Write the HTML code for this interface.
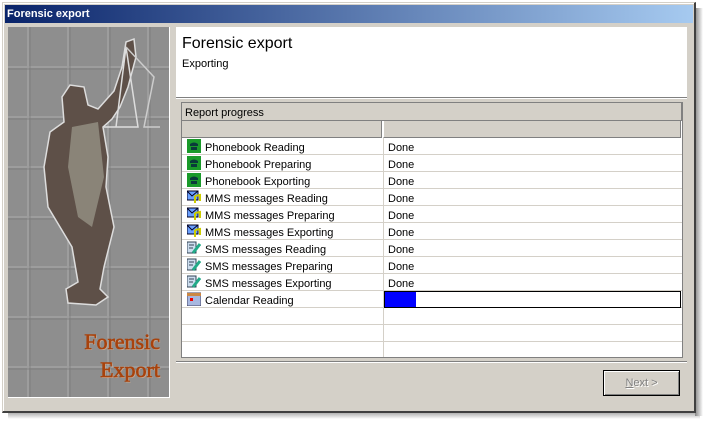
<!DOCTYPE html>
<html><head><style>
*{margin:0;padding:0;box-sizing:border-box}
body{width:709px;height:425px;background:#fff;position:relative;overflow:hidden;font-family:"Liberation Sans",Tahoma,sans-serif;font-size:11px;color:#000}
.a{position:absolute}
.row{position:absolute;left:182px;width:500px;height:17px;border-bottom:1px solid #d4d0c8;background:#fff}
.row .c2{position:absolute;left:206px;top:4px}
.row .ic{position:absolute;left:5px;top:1px;width:14px;height:14px}
.row .t{position:absolute;left:23px;top:4px}
</style></head><body>
<div class="a" style="left:8px;top:411px;width:692px;height:8px;background:linear-gradient(#999,#fff)"></div>
<div class="a" style="left:695px;top:8px;width:8px;height:408px;background:linear-gradient(90deg,#888,#fff)"></div>
<div class="a" style="left:2px;top:2px;width:694px;height:411px;background:#d4d0c8;border:1px solid #d4d0c8;border-right:2px solid #404040;border-bottom:2px solid #404040;box-shadow:inset 1px 1px 0 #fff"></div>
<div class="a" style="left:5px;top:5px;width:688px;height:18px;background:linear-gradient(90deg,#0a246a,#a6caf0)"></div>
<div class="a" style="left:7px;top:8px;color:#fff;font-weight:bold;font-size:11px">Forensic export</div>
<div class="a" style="left:8px;top:27px;width:162px;height:371px;background:#8e8e8e;border-right:1px solid #fff;border-bottom:1px solid #fff;overflow:hidden">
<svg width="162" height="371" viewBox="0 0 162 371">
<g stroke="#a4a4a4" stroke-width="2" fill="none" opacity=".7">
<path d="M0 40H162M0 90H162M0 140H162M0 190H162M0 240H162M0 290H162M0 340H162M20 0V371M60 0V371M100 0V371M140 0V371"/></g>
<g stroke="#777" stroke-width="1" fill="none" opacity=".7">
<path d="M0 42H162M0 92H162M0 142H162M0 192H162M0 242H162M0 292H162M0 342H162M22 0V371M62 0V371M102 0V371M142 0V371"/></g>
<path d="M118 15 L126 12 L128 30 L120 60 L112 80 L104 92 L95 100 L100 130 L98 160 L106 200 L96 240 L92 262 L100 270 L88 278 L60 276 L58 262 L70 255 L64 220 L52 200 L40 180 L36 140 L42 105 L56 95 L54 70 L62 58 L76 60 L80 78 L90 82 L106 64 L114 40Z" fill="#5e5048" stroke="#ddd" stroke-width="1.5"/>
<path d="M64 100 L90 95 L96 150 L84 200 L70 190 L60 140Z" fill="#8a8478"/>
<path d="M118 20 L108 100 L96 100 M118 20 L130 100 L122 100 M98 100 H128" stroke="#ddd" stroke-width="1.5" fill="none"/>
<path d="M118 20 L146 50 L136 100 L152 100" stroke="#ccc" stroke-width="1.5" fill="none"/>
<g font-family="Liberation Serif,serif" font-size="22" text-anchor="end">
<text x="153" y="323" fill="#e0b090" opacity=".7">Forensic</text>
<text x="153" y="351" fill="#e0b090" opacity=".7">Export</text>
<text x="152" y="322" fill="#a8420c" stroke="#a8420c" stroke-width=".6">Forensic</text>
<text x="152" y="350" fill="#a8420c" stroke="#a8420c" stroke-width=".6">Export</text>
</g>
</svg></div>
<div class="a" style="left:176px;top:27px;width:511px;height:70px;background:#fff"></div>
<div class="a" style="left:182px;top:35px;font-size:16px">Forensic export</div>
<div class="a" style="left:182px;top:58px">Exporting</div>
<div class="a" style="left:176px;top:97px;width:511px;height:1px;background:#808080"></div>
<div class="a" style="left:176px;top:98px;width:511px;height:1px;background:#fff"></div>
<div class="a" style="left:181px;top:102px;width:502px;height:256px;background:#fff;border:1px solid #808080"></div>
<div class="a" style="left:182px;top:103px;width:500px;height:18px;background:#d4d0c8;border-bottom:1px solid #808080;border-right:1px solid #808080"></div>
<div class="a" style="left:185px;top:107px">Report progress</div>
<div class="a" style="left:182px;top:121px;width:200px;height:17px;background:#d4d0c8;border-right:1px solid #808080;border-bottom:1px solid #808080"></div>
<div class="a" style="left:383px;top:121px;width:298px;height:17px;background:#d4d0c8;border-bottom:1px solid #808080;border-right:1px solid #808080;border-left:1px solid #fff"></div>
<div class="a" style="left:383px;top:138px;width:1px;height:219px;background:#d4d0c8;z-index:2"></div>

<div class="row" style="top:138px"><svg class="ic"><rect width="14" height="14" fill="#1a9a2a"/><path d="M3 5Q7 2 11 5V7H3Z M4 8H10V11H4Z" fill="#0a3a3a"/></svg><span class="t">Phonebook Reading</span><span class="c2">Done</span></div>
<div class="row" style="top:155px"><svg class="ic"><rect width="14" height="14" fill="#1a9a2a"/><path d="M3 5Q7 2 11 5V7H3Z M4 8H10V11H4Z" fill="#0a3a3a"/></svg><span class="t">Phonebook Preparing</span><span class="c2">Done</span></div>
<div class="row" style="top:172px"><svg class="ic"><rect width="14" height="14" fill="#1a9a2a"/><path d="M3 5Q7 2 11 5V7H3Z M4 8H10V11H4Z" fill="#0a3a3a"/></svg><span class="t">Phonebook Exporting</span><span class="c2">Done</span></div>
<div class="row" style="top:189px"><svg class="ic"><rect x="0" y="1" width="11" height="9" fill="#6aa0ff" stroke="#002" /><path d="M0 1L5 6L11 1" stroke="#002" fill="none"/><path d="M8 6V13M8 6L13 5V11" stroke="#cc0" stroke-width="2" fill="none"/></svg><span class="t">MMS messages Reading</span><span class="c2">Done</span></div>
<div class="row" style="top:206px"><svg class="ic"><rect x="0" y="1" width="11" height="9" fill="#6aa0ff" stroke="#002" /><path d="M0 1L5 6L11 1" stroke="#002" fill="none"/><path d="M8 6V13M8 6L13 5V11" stroke="#cc0" stroke-width="2" fill="none"/></svg><span class="t">MMS messages Preparing</span><span class="c2">Done</span></div>
<div class="row" style="top:223px"><svg class="ic"><rect x="0" y="1" width="11" height="9" fill="#6aa0ff" stroke="#002" /><path d="M0 1L5 6L11 1" stroke="#002" fill="none"/><path d="M8 6V13M8 6L13 5V11" stroke="#cc0" stroke-width="2" fill="none"/></svg><span class="t">MMS messages Exporting</span><span class="c2">Done</span></div>
<div class="row" style="top:240px"><svg class="ic"><rect x="0" y="1" width="9" height="11" fill="#cde" stroke="#345"/><path d="M6 12L13 3" stroke="#2a8" stroke-width="3"/><path d="M2 4H7M2 7H6" stroke="#345"/></svg><span class="t">SMS messages Reading</span><span class="c2">Done</span></div>
<div class="row" style="top:257px"><svg class="ic"><rect x="0" y="1" width="9" height="11" fill="#cde" stroke="#345"/><path d="M6 12L13 3" stroke="#2a8" stroke-width="3"/><path d="M2 4H7M2 7H6" stroke="#345"/></svg><span class="t">SMS messages Preparing</span><span class="c2">Done</span></div>
<div class="row" style="top:274px"><svg class="ic"><rect x="0" y="1" width="9" height="11" fill="#cde" stroke="#345"/><path d="M6 12L13 3" stroke="#2a8" stroke-width="3"/><path d="M2 4H7M2 7H6" stroke="#345"/></svg><span class="t">SMS messages Exporting</span><span class="c2">Done</span></div>
<div class="row" style="top:291px"><svg class="ic"><rect x="0" y="1" width="14" height="13" fill="#a8b8e0" stroke="#446"/><rect x="0" y="1" width="14" height="3" fill="#c84"/><rect x="3" y="6" width="3" height="3" fill="#e00"/></svg><span class="t">Calendar Reading</span>
<div class="a" style="left:202px;top:0;width:297px;height:17px;border:1px solid #000;background:#fff"><div style="width:31px;height:15px;background:#0000ff"></div></div></div>
<div class="row" style="top:308px"></div>
<div class="row" style="top:325px"></div>
<div class="row" style="top:342px;height:15px;border:none"></div>

<div class="a" style="left:176px;top:361px;width:511px;height:1px;background:#808080"></div>
<div class="a" style="left:176px;top:362px;width:511px;height:1px;background:#fff"></div>
<div class="a" style="left:603px;top:370px;width:77px;height:26px;border:1px solid #000;background:#d4d0c8;box-shadow:inset 1px 1px 0 #fff,inset -1px -1px 0 #808080"></div>
<div class="a" style="left:603px;top:377px;width:77px;text-align:center;color:#808080;text-shadow:1px 1px 0 #fff"><u>N</u>ext &gt;</div>
</body></html>
